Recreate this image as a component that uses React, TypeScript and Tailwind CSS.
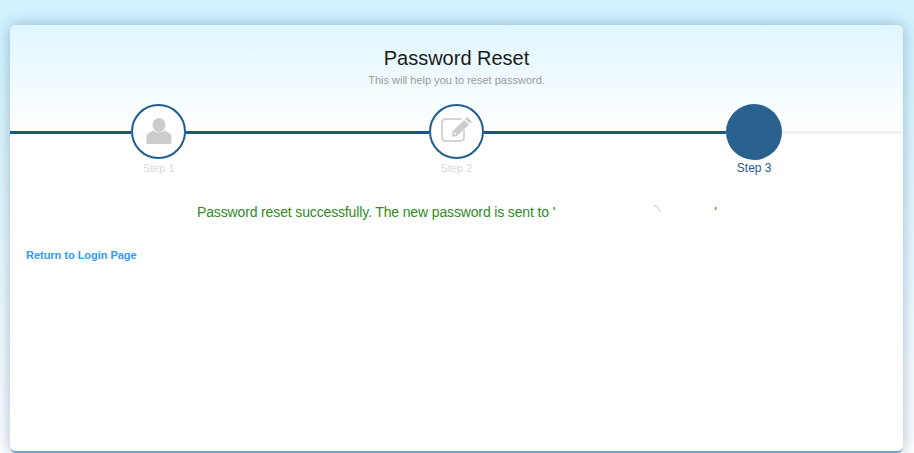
import React from "react";

const font = { fontFamily: '"Liberation Sans", Arial, sans-serif' };

function UserIcon() {
  return (
    <svg width="26" height="26" viewBox="0 0 26 26" className="block -translate-y-[1px]">
      <ellipse cx="13" cy="7" rx="6.5" ry="7" fill="#cccccc" />
      <path d="M0.5 26 V19 C0.5 15.5 4 14.2 7.5 12.5 C9.5 15 16.5 15 18.5 12.5 C22 14.2 25.5 15.5 25.5 19 V24 C25.5 25.2 24.7 26 23.5 26 Z" fill="#cccccc" />
    </svg>
  );
}

function EditIcon() {
  return (
    <svg width="31" height="25" viewBox="0 0 31 25" className="block -translate-y-[2px]">
      <path d="M23 14 V20 C23 22.5 21.5 24 19 24 H5 C2.5 24 1 22.5 1 20 V6 C1 3.5 2.5 2 5 2 H20" fill="none" stroke="#d4d4d4" strokeWidth="2" strokeLinecap="round" />
      <path d="M26 0 L31 4.5 L29 6.5 L24 2 Z" fill="#cccccc" />
      <path d="M23 3 L28 7.5 L16 19 L11 20 L11.5 14.5 Z" fill="#cccccc" />
      <path d="M13 15.5 L15 17.5" stroke="#ffffff" strokeWidth="1.3" />
    </svg>
  );
}

function Step({ label, active, rightDone, leftDone, children }: { label: string; active?: boolean; leftDone?: boolean; rightDone?: boolean; children?: React.ReactNode }) {
  return (
    <div className="flex flex-col items-stretch">
      <div className="flex h-[56px] items-center">
        <div className={leftDone ? "h-[3px] flex-1 bg-[#1c5487]" : "h-[3px] flex-1 bg-[#f1f1f1]"} />
        <div className={active ? "flex h-[56px] w-[56px] shrink-0 items-center justify-center rounded-full bg-[#2a628f]" : "flex h-[55px] w-[55px] shrink-0 self-start items-center justify-center rounded-full border-2 border-[#1f5e8e] bg-white"}>
          {children}
        </div>
        <div className={rightDone ? "h-[3px] flex-1 bg-[#1c5487]" : "h-[3px] flex-1 bg-[#f1f1f1]"} />
      </div>
      <div className={active ? "text-center text-[12px] leading-[16px] text-[#2a5a8c]" : "text-center text-[11px] leading-[16px] text-[#d9d9d9]"}>{label}</div>
    </div>
  );
}

export default function App() {
  return (
    <div className="h-[453px] w-[914px] overflow-hidden bg-gradient-to-b from-[#cff3ff] to-[#ffffff] pt-[25px] pl-[10px] pr-[11px]" style={font}>
      <div className="h-[428px] rounded-[6px] border-b-2 border-b-[#6fa3cc] bg-gradient-to-b from-[#dff6ff] via-[#ffffff] via-[25%] to-[#ffffff] shadow-[0_0_16px_rgba(60,100,140,0.45)]">
        <div className="pt-[21px] text-center">
          <h1 className="text-[20px] leading-[24px] text-[#1a1a1a]">Password Reset</h1>
          <p className="mt-[3px] text-[11px] leading-[14px] text-[#9a9a9a]">This will help you to reset password.</p>
        </div>
        <div className="mt-[17px] grid grid-cols-3">
          <Step label="Step 1" leftDone rightDone><UserIcon /></Step>
          <Step label="Step 2" leftDone rightDone><EditIcon /></Step>
          <Step label="Step 3" active leftDone />
        </div>
        <div className="mt-[26px] flex items-center pl-[187px] text-[14px] leading-[20px] tracking-[-0.14px] text-[#2f8a24]">
          <span>Password reset successfully. The new password is sent to '</span>
          <span className="flex w-[159px] items-center pl-[98px]">
            <svg width="8" height="8" viewBox="0 0 8 8" className="block -translate-y-[3px]"><path d="M1 1 C4 1 6 3 7 7" fill="none" stroke="#9fd0c4" strokeWidth="1" /></svg>
          </span>
          <span>'</span>
        </div>
        <a href="#" className="mt-[25px] ml-[16px] block text-[11px] leading-[16px] font-bold tracking-[-0.03px] text-[#2f9bfa]">Return to Login Page</a>
      </div>
    </div>
  );
}
